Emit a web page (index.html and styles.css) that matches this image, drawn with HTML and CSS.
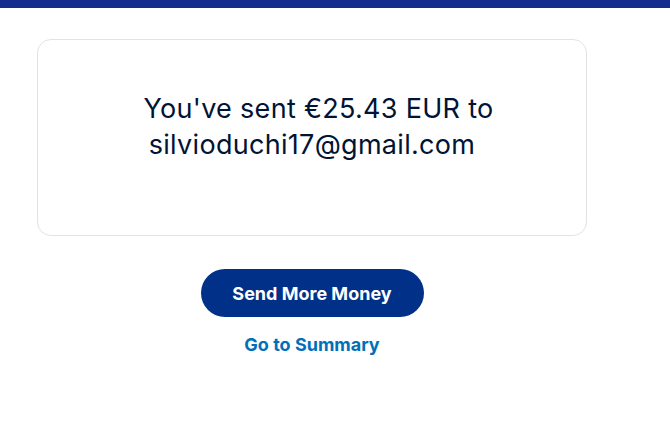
FILE: index.html
```html
<!DOCTYPE html>
<html lang="en">
<head>
  <meta charset="UTF-8" />
  <meta name="viewport" content="width=device-width, initial-scale=1.0" />
  <title>Payment Sent</title>
  <link rel="stylesheet" href="styles.css">
</head>
<body>
  <div class="top-bar"></div>

  <main class="done">
    <section class="done-card">
      <p class="done-message"><span class="first-line">You've sent €25.43 EUR to</span><br>silvioduchi17@gmail.com</p>
    </section>

    <div class="done-actions">
      <button class="send-more">Send More Money</button>
      <a class="summary-link" href="#">Go to Summary</a>
    </div>
  </main>
</body>
</html>
```

FILE: styles.css
```css
:root {
  --bar: #142c8e;
  --navy: #003087;
  --ink: #001435;
  --link: #0070ba;
  --line: #e3e3e3;
}

body {
  margin: 0;
  font-family: Inter, "Noto Sans", sans-serif;
  background: #fff;
  color: var(--ink);
}

.top-bar {
  height: 8px;
  background-color: var(--bar);
}

.done {
  width: 550px;
  padding: 31px 0 0 37px;
}

.done-card {
  height: 195px;
  border: 1px solid var(--line);
  border-radius: 14px;
  display: flex;
  align-items: center;
  justify-content: center;
}

.done-message {
  margin: 0 0 21px;
  font-size: 27px;
  line-height: 36px;
  letter-spacing: 0.3px;
  text-align: center;
}

.first-line {
  padding-left: 13px;
}

.done-actions {
  display: flex;
  flex-direction: column;
  align-items: center;
  margin-top: 33px;
}

.send-more {
  width: 223px;
  height: 48px;
  border: none;
  border-radius: 24px;
  background-color: var(--navy);
  color: #fff;
  font-family: Inter, "Noto Sans", sans-serif;
  font-size: 18px;
  font-weight: 700;
  cursor: pointer;
}

.summary-link {
  margin-top: 17px;
  color: var(--link);
  font-size: 18px;
  font-weight: 700;
  text-decoration: none;
}
```
